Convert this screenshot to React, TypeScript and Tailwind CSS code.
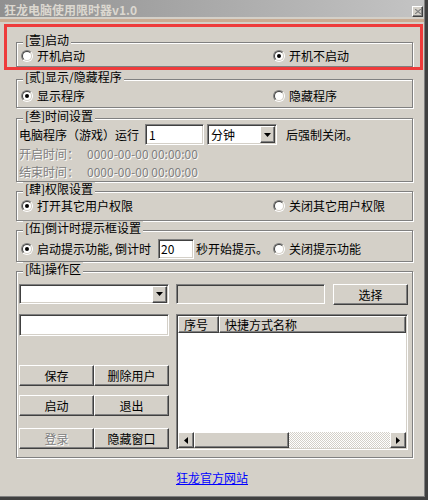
import type { ReactNode } from "react";

const sunken =
  "border border-t-[#808080] border-l-[#808080] border-b-white border-r-white shadow-[inset_1px_1px_0_#404040,inset_-1px_-1px_0_#d4d0c8]";
const raised =
  "border border-t-white border-l-white border-b-[#404040] border-r-[#404040] shadow-[inset_-1px_-1px_0_#808080] bg-[#d4d0c8]";
const disabledText = "text-[#808080] [text-shadow:1px_1px_0_#fff]";

function Radio({ checked = false }: { checked?: boolean }) {
  return (
    <span className="inline-flex h-[12px] w-[12px] shrink-0 rounded-full border border-t-[#808080] border-l-[#808080] border-b-white border-r-white">
      <span className="flex h-full w-full items-center justify-center rounded-full border border-t-[#404040] border-l-[#404040] border-b-[#d4d0c8] border-r-[#d4d0c8] bg-white">
        {checked && <span className="h-[4px] w-[4px] rounded-full bg-black" />}
      </span>
    </span>
  );
}

function Group({ title, className, children }: { title: string; className: string; children: ReactNode }) {
  return (
    <div className={`relative w-[397px] border border-[#808080] shadow-[inset_1px_1px_0_#fff,1px_1px_0_#fff] ${className}`}>
      <span className="absolute left-[6px] top-[-10px] bg-[#d4d0c8] px-[2px] leading-[14px]">{title}</span>
      {children}
    </div>
  );
}

function RadioPair({ a, b, on }: { a: string; b: string; on: 0 | 1 }) {
  return (
    <div className="flex h-[14px] items-center pl-[4px]">
      <div className="flex w-[252px] items-center gap-[4px]">
        <Radio checked={on === 0} />
        <span>{a}</span>
      </div>
      <div className="flex items-center gap-[4px]">
        <Radio checked={on === 1} />
        <span>{b}</span>
      </div>
    </div>
  );
}

function DownArrow() {
  return (
    <svg width="7" height="4" viewBox="0 0 7 4">
      <path d="M0 0h7L3.5 4z" fill="#000" />
    </svg>
  );
}

function ComboButton() {
  return (
    <div className={`flex h-[17px] w-[15px] items-center justify-center ${raised}`}>
      <DownArrow />
    </div>
  );
}

function ScrollArrow({ dir }: { dir: "l" | "r" }) {
  return (
    <div className={`flex h-[16px] w-[16px] shrink-0 items-center justify-center ${raised}`}>
      <svg width="4" height="7" viewBox="0 0 4 7">
        <path d={dir === "l" ? "M4 0v7L0 3.5z" : "M0 0v7l4-3.5z"} fill="#000" />
      </svg>
    </div>
  );
}

export default function App() {
  return (
    <div className="relative h-[500px] w-[428px] border-b-[3px] border-r-[3px] border-[#404040] bg-[#d4d0c8] font-['Noto_Sans_CJK_SC',sans-serif] text-[12px] leading-[14px] text-black">
      <div className="h-full w-full border-b border-r border-[#808080]">
        {/* title bar */}
        <div className="flex h-[17px] items-start justify-between bg-gradient-to-r from-[#909090] to-[#c4c4c4] pl-[4px] pr-[1px]">
          <span className="mt-[3px] font-bold text-[#dcd8d0]">狂龙电脑使用限时器v1.0</span>
          <div className={`mt-[6px] flex h-[11px] w-[11px] items-center justify-center ${raised}`}>
            <svg width="6" height="5" viewBox="0 0 6 5">
              <path d="M0 0l6 5M6 0L0 5" stroke="#808080" strokeWidth="1.2" />
            </svg>
          </div>
        </div>
        <div className="mt-[2px] h-[3px] bg-[#c9ab93]" />

        <div className="flex flex-col pl-[16px]">
          <Group title="[壹]启动" className="mt-[20px] h-[25px] pt-[6px]">
            <RadioPair a="开机启动" b="开机不启动" on={1} />
          </Group>

          <Group title="[贰]显示/隐藏程序" className="mt-[12px] h-[29px] pt-[9px]">
            <RadioPair a="显示程序" b="隐藏程序" on={0} />
          </Group>

          <Group title="[叁]时间设置" className="mt-[10px] h-[64px] pl-[2px] pt-[5px]">
            <div className="flex h-[21px] items-center">
              <span className="w-[126px]">电脑程序（游戏）运行</span>
              <div className={`flex h-[21px] w-[59px] items-center bg-white pl-[3px] ${sunken}`}>1</div>
              <div className={`ml-[3px] flex h-[21px] w-[70px] items-center justify-between bg-white pl-[3px] pr-[1px] ${sunken}`}>
                <span>分钟</span>
                <ComboButton />
              </div>
              <span className="ml-[9px]">后强制关闭。</span>
            </div>
            <div className={`flex h-[18px] items-center ${disabledText}`}>
              <span className="w-[68px]">开启时间：</span>
              <span>0000-00-00 00:00:00</span>
            </div>
            <div className={`flex h-[18px] items-center ${disabledText}`}>
              <span className="w-[68px]">结束时间：</span>
              <span>0000-00-00 00:00:00</span>
            </div>
          </Group>

          <Group title="[肆]权限设置" className="mt-[9px] h-[30px] pt-[7px]">
            <RadioPair a="打开其它用户权限" b="关闭其它用户权限" on={0} />
          </Group>

          <Group title="[伍]倒计时提示框设置" className="mt-[9px] h-[32px] pl-[4px] pt-[8px]">
            <div className="flex h-[20px] items-center">
              <div className="flex w-[252px] items-center">
                <Radio checked />
                <span className="ml-[4px] w-[121px]">启动提示功能, 倒计时</span>
                <div className={`flex h-[20px] w-[36px] items-center bg-white pl-[2px] ${sunken}`}>20</div>
                <span className="ml-[2px]">秒开始提示。</span>
              </div>
              <div className="flex items-center gap-[4px]">
                <Radio />
                <span>关闭提示功能</span>
              </div>
            </div>
          </Group>

          <Group title="[陆]操作区" className="mt-[9px] flex h-[187px] pl-[2px] pt-[12px]">
            <div className="flex w-[150px] flex-col">
              <div className={`flex h-[20px] items-center justify-end bg-white pr-[1px] ${sunken}`}>
                <ComboButton />
              </div>
              <div className={`mt-[10px] h-[22px] bg-white ${sunken}`} />
              <div className="mt-[29px] flex">
                <div className={`h-[21px] w-[75px] ${raised} flex items-center justify-center`}>保存</div>
                <div className={`h-[21px] w-[75px] ${raised} flex items-center justify-center`}>删除用户</div>
              </div>
              <div className="mt-[9px] flex">
                <div className={`h-[21px] w-[75px] ${raised} flex items-center justify-center`}>启动</div>
                <div className={`h-[21px] w-[75px] ${raised} flex items-center justify-center`}>退出</div>
              </div>
              <div className="mt-[12px] flex">
                <div className={`h-[21px] w-[75px] ${raised} flex items-center justify-center ${disabledText}`}>登录</div>
                <div className={`h-[21px] w-[75px] ${raised} flex items-center justify-center`}>隐藏窗口</div>
              </div>
            </div>

            <div className="ml-[7px] flex w-[232px] flex-col">
              <div className="flex h-[21px] items-start">
                <div className={`h-[20px] w-[149px] bg-[#d4d0c8] ${sunken}`} />
                <div className={`ml-[8px] flex h-[21px] w-[75px] items-center justify-center ${raised}`}>选择</div>
              </div>
              <div className={`mt-[9px] flex h-[136px] flex-col bg-white p-[1px] ${sunken}`}>
                <div className="flex h-[17px]">
                  <div className={`flex w-[41px] items-center pl-[5px] ${raised}`}>序号</div>
                  <div className={`flex flex-1 items-center pl-[5px] ${raised}`}>快捷方式名称</div>
                </div>
                <div className="flex-1" />
                <div className="flex h-[16px]">
                  <ScrollArrow dir="l" />
                  <div className={`h-[16px] w-[95px] ${raised}`} />
                  <div className="flex-1 bg-[repeating-conic-gradient(#d4d0c8_0_25%,#fff_0_50%)] bg-[length:2px_2px]" />
                  <ScrollArrow dir="r" />
                </div>
              </div>
            </div>
          </Group>
        </div>

        <div className="mt-[13px] w-[424px] text-center">
          <span className="text-[#0000ff] underline">狂龙官方网站</span>
        </div>
      </div>

      {/* highlight annotation */}
      <div className="pointer-events-none absolute left-[4px] top-[24px] h-[46px] w-[419px] border-[3px] border-[#ee3b3b]" />
    </div>
  );
}
